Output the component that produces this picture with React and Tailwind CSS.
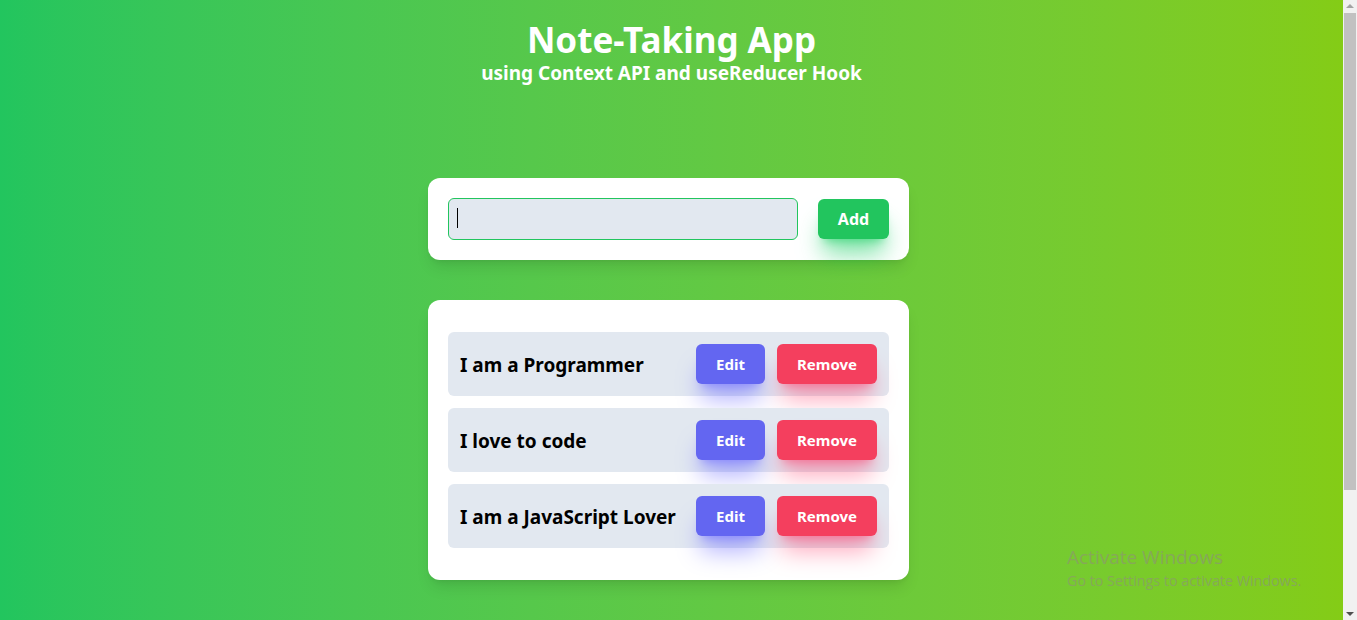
import React, { useState } from 'react';

const notasIniciales = [
  { id: 1, texto: 'I am a Programmer' },
  { id: 2, texto: 'I love to code' },
  { id: 3, texto: 'I am a JavaScript Lover' }
];

function App() {
  const [notas] = useState(notasIniciales);
  const [texto, setTexto] = useState('');

  return (
    <div className="flex h-[620px] overflow-hidden font-['Noto_Sans',sans-serif]">
      <div className="relative flex-1 bg-gradient-to-r from-[#22c55e] to-[#84cc16]">
        {/* Encabezado */}
        <div className="pt-[19px] text-center text-white">
          <h1 className="text-[35px] font-bold leading-[42px]">Note-Taking App</h1>
          <h2 className="text-[19px] font-bold leading-[24px]">using Context API and useReducer Hook</h2>
        </div>

        <div className="mx-auto mt-[93px] w-[481px] -translate-x-[3px]">
          {/* Formulario */}
          <div className="flex items-center gap-5 rounded-xl bg-white p-5 shadow-lg">
            <div className="relative flex-1">
              <input
                value={texto}
                onChange={e => setTexto(e.target.value)}
                className="h-[42px] w-full rounded-md border border-[#22c55e] bg-[#e2e8f0] px-2 outline-none"
              />
              {texto === '' && <div className="pointer-events-none absolute left-[9px] top-[10px] h-[20px] w-px bg-black" />}
            </div>
            <button className="h-10 w-[71px] rounded-md bg-[#22c55e] font-bold text-white shadow-xl shadow-green-500/50">
              Add
            </button>
          </div>

          {/* Lista de notas */}
          <div className="mt-10 flex flex-col gap-3 rounded-xl bg-white px-5 py-8 shadow-lg">
            {notas.map(n => (
              <div key={n.id} className="flex h-16 items-center rounded-md bg-[#e2e8f0] pl-3 pr-3">
                <span className="flex-1 pt-[2px] text-[19px] font-bold text-black">{n.texto}</span>
                <button className="h-10 w-[69px] rounded-md bg-[#6366f1] text-[15px] font-bold text-white shadow-xl shadow-indigo-500/50">
                  Edit
                </button>
                <button className="ml-3 h-10 w-[100px] rounded-md bg-[#f43f5e] text-[15px] font-bold text-white shadow-xl shadow-rose-500/40">
                  Remove
                </button>
              </div>
            ))}
          </div>
        </div>

        {/* Marca de agua */}
        <div className="pointer-events-none absolute left-[1067px] top-[545px] font-['Open_Sans',sans-serif] font-normal text-[#86a85a]">
          <div className="text-[19px] leading-[25px]">Activate Windows</div>
          <div className="text-[14.3px] leading-[21px]">Go to Settings to activate Windows.</div>
        </div>
      </div>

      {/* Barra de desplazamiento */}
      <div className="flex w-[14px] flex-col items-center bg-[#f1f1f1]">
        <div className="mt-[4px] h-0 w-0 border-x-[4px] border-b-[4px] border-x-transparent border-b-[#a3a3a3]" />
        <div className="mt-[5px] h-[477px] w-[12px] bg-[#c1c1c1]" />
        <div className="mt-auto mb-[4px] h-0 w-0 border-x-[4px] border-t-[4px] border-x-transparent border-t-[#505050]" />
      </div>
    </div>
  );
}

export default App;
